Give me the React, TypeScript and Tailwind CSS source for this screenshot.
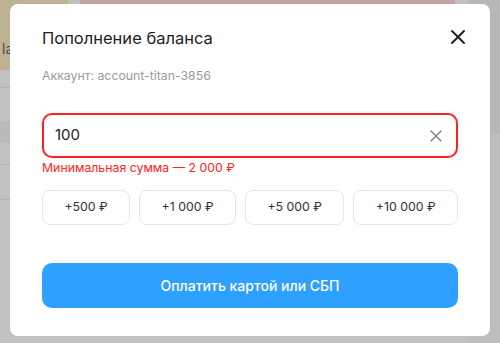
import { X } from "lucide-react";

const amounts = ["+500 ₽", "+1 000 ₽", "+5 000 ₽", "+10 000 ₽"];

const App = () => {
  return (
    <div className="relative h-[343px] w-[500px] overflow-hidden bg-[#c1c1c1] font-['Inter',sans-serif]">
      {/* затемнённая страница за модалкой */}
      <div className="flex h-full">
        <div className="flex w-[68px] flex-col">
          <div className="h-[70px] bg-[#bdb392] pt-[38px] pl-[2px] text-[14px] text-[#5a3a5a]">la</div>
          <div className="h-[18px] border-b border-[#b0b0b0] bg-[#c1c1c1]" />
          <div className="h-[35px] border-b border-[#b8b8b8] bg-[#c1c1c1]" />
          <div className="h-[20px] bg-[#b9babe]" />
          <div className="h-[22px] border-b border-[#b0b0b0] bg-[#c1c1c1]" />
          <div className="h-[35px] border-b border-[#b0b0b0] bg-[#c1c1c1]" />
          <div className="flex-1 bg-[#c1c1c1]" />
        </div>
        <div className="w-[12px] bg-[#c1c1c1]" />
        <div className="flex flex-1 flex-col">
          <div className="h-[4px] bg-[#c2a3a3]" />
          <div className="flex-1" />
        </div>
        <div className="w-[13px] bg-[#c1c1c1]" />
        <div className="flex w-[32px] flex-col">
          <div className="h-[133px] bg-[#b6b7bb]" />
          <div className="flex-1 bg-[#bdbdbd]" />
        </div>
      </div>

      {/* модалка */}
      <div className="absolute left-[10px] top-[4px] h-[332px] w-[480px] rounded-[8px] bg-white px-8 pt-[22px]">
        <div className="flex h-[24px] items-center justify-between">
          <h2 className="text-[16.5px] text-[#222]">Пополнение баланса</h2>
          <X size={24} strokeWidth={2} className="mr-[-12px] mt-[-3px] text-[#222]" />
        </div>
        <p className="mt-[18px] text-[12.3px] leading-4 text-[#9a9a9a]">Аккаунт: account-titan-3856</p>

        <div className="mt-[29px] flex h-[45px] items-center justify-between rounded-[10px] border-2 border-[#ff1f1f] pl-[11px] pr-[10px]">
          <span className="text-[15px] text-[#222]">100</span>
          <X size={20} strokeWidth={1.5} className="text-[#7a7a7a]" />
        </div>
        <p className="mt-[2px] text-[12.3px] leading-4 text-[#ff2424]">Минимальная сумма — 2 000 ₽</p>

        <div className="mt-[14px] flex gap-[9px]">
          {amounts.map((a) => (
            <button
              key={a}
              className="flex h-[35px] flex-auto items-center justify-center whitespace-nowrap rounded-[8px] border border-[#e6e6e6] px-[16px] text-[12.3px] text-[#333]"
            >
              {a}
            </button>
          ))}
        </div>

        <button className="mt-[38px] flex h-[45px] w-full items-center justify-center rounded-[10px] bg-[#2ea0ff] text-[14px] font-medium text-white">
          Оплатить картой или СБП
        </button>
      </div>
    </div>
  );
};

export default App;
